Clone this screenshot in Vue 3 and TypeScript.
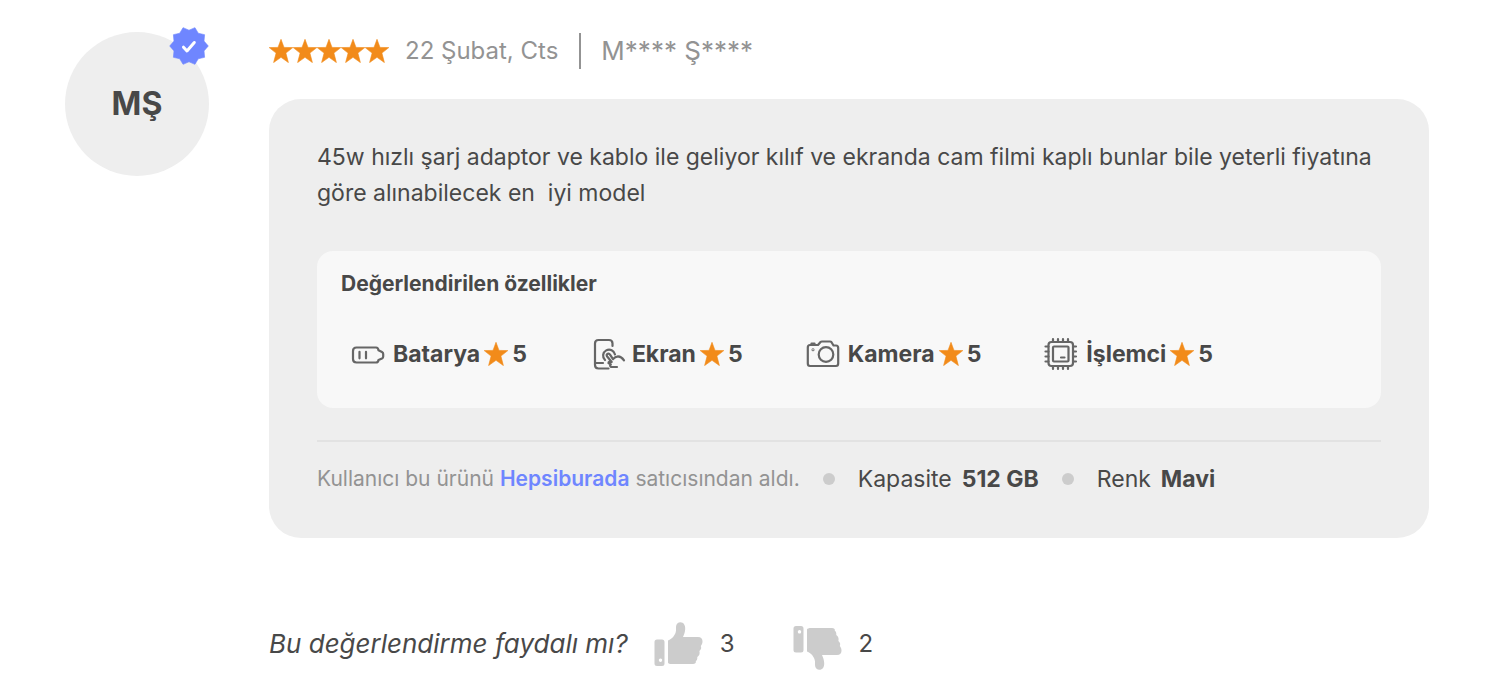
<script setup lang="ts">
import { ref } from 'vue'

interface Feature {
  icon: string
  name: string
  score: number
}

const features: Feature[] = [
  { icon: 'battery', name: 'Batarya', score: 5 },
  { icon: 'screen', name: 'Ekran', score: 5 },
  { icon: 'camera', name: 'Kamera', score: 5 },
  { icon: 'chip', name: 'İşlemci', score: 5 },
]

const likes = ref(3)
const dislikes = ref(2)

// Alternating outer and inner points of the ten-pointed seal
const sealPoints = Array.from({ length: 20 }, (_, i) => {
  const radius = i % 2 === 0 ? 19.3 : 15.8
  const angle = (i * Math.PI) / 10
  return `${(20 + radius * Math.cos(angle)).toFixed(2)},${(20 + radius * Math.sin(angle)).toFixed(2)}`
}).join(' ')
</script>

<template>
  <article class="review">
    <svg class="sprite" aria-hidden="true">
      <symbol id="star" viewBox="0 0 24 24">
        <path d="M12 0.3 15 8.4 23.8 8.6 16.9 14.1 19.4 23.6 12 18.3 4.6 23.6 7.1 14.1 0.2 8.6 9 8.4Z" fill="#f28b1a" stroke="#f28b1a" stroke-width=".6" stroke-linejoin="round" />
      </symbol>
      <symbol id="thumb" viewBox="0 0 50 50">
        <path fill-rule="evenodd" d="M3 18.5h5a2.500 2.500 0 0 1 2.500 2.500v21.500a2.500 2.500 0 0 1-2.500 2.500h-5a2.500 2.500 0 0 1-2.500-2.500v-21.500a2.500 2.500 0 0 1 2.500-2.500ZM6.500 37.500a1.700 1.700 0 1 0 .01 0Z" />
        <path d="M14 19.500C18.500 17.500 21.500 14 22 9.500V6C22 3 24 1.200 26.500 1.200 29.500 1.200 31.400 4 31.200 8 31 11 30.200 13.500 29 16H44C47 16 48.700 18 48.500 20.500 48.400 22.500 47.800 23.800 46.800 25 47.600 27 47.200 28.500 45.400 30 46 32.500 45.500 34.500 43.300 36 43.500 38.500 42.800 39.500 41.800 40.200 42.200 42 41 43 39 43H18C16 43 14 42.500 14 41.500Z" />
      </symbol>
    </svg>

    <div class="avatar">
      <span>MŞ</span>
      <svg class="seal" viewBox="0 0 40 40" role="img" aria-label="Onaylı">
        <polygon :points="sealPoints" fill="#6f86ff" stroke="#6f86ff" stroke-width=".6" stroke-linejoin="round" />
        <path d="M14.500 21.200 18 25 25.300 16.500" fill="none" stroke="#fff" stroke-width="3" stroke-linecap="round" stroke-linejoin="round" />
      </svg>
    </div>

    <div class="content">
      <header class="meta">
        <div class="stars" role="img" aria-label="5 yıldız">
          <svg v-for="n in 5" :key="n" class="star"><use href="#star" /></svg>
        </div>
        <span class="date">22 Şubat, Cts</span>
        <span class="author">M**** Ş****</span>
      </header>

      <section class="card">
        <p class="text">45w hızlı şarj adaptor ve kablo ile geliyor kılıf ve ekranda cam filmi kaplı bunlar bile yeterli fiyatına göre alınabilecek en&nbsp; iyi model</p>

        <div class="rated">
          <h3>Değerlendirilen özellikler</h3>
          <ul>
            <li v-for="feature in features" :key="feature.name">
              <svg class="icon" viewBox="0 0 48 40" fill="none" stroke="#666" stroke-width="2.200" stroke-linecap="round" stroke-linejoin="round">
                <g v-if="feature.icon === 'battery'">
                  <path d="M12.500 13.500H32Q34.200 13.500 34.500 16.300L38 18.100Q39.200 18.700 39.200 20V22.500Q39.200 23.800 38 24.400L34.500 26Q34.200 28.500 32 28.500H12.500Q9 28.500 9 25V17Q9 13.500 12.500 13.500Z" />
                  <path d="M15.500 17.800V24.300M22 17.800V24.300" />
                </g>
                <g v-else-if="feature.icon === 'screen'">
                  <path d="M29.500 12V9.500Q29.500 6 26 6H15.500Q12 6 12 9.500V31Q12 34.500 15.500 34.500H25.500M12.500 29H20" />
                  <path d="M22 26A6 6 0 1 1 32 20.500" />
                  <path d="M28.700 28 24 22.300Q23.200 20.500 24.700 19.800 26.200 19.200 27.200 20.800L30 25.200Q32 22.500 35 22.300 38.500 22.500 41 26.300M28.700 28Q25.200 27 25.500 29L27.800 30.500Q26.300 31.500 28 33H34" />
                </g>
                <g v-else-if="feature.icon === 'camera'">
                  <path d="M11 11H19L21.500 8Q22 7.500 23 7.500H31Q32 7.500 32.500 8.200L34.500 11.500H37Q39.200 11.500 39.200 14V29.500Q39.200 32 37 32H11Q8.800 32 8.800 29.500V13.500Q8.800 11 11 11ZM12.500 10.500V9.500H15.500V10.500" />
                  <circle cx="27" cy="20.500" r="7.300" />
                  <circle cx="14" cy="15.700" r=".4" />
                </g>
                <g v-else>
                  <rect x="11.500" y="8" width="24.500" height="24" rx="3" />
                  <rect x="16" y="12.500" width="15.500" height="15" rx="1" />
                  <path d="M16 8V5M21 8V5M26 8V5M31 8V5M16 32V35M21 32V35M26 32V35M31 32V35M11.500 12.500H8.500M11.500 17.500H8.500M11.500 22.500H8.500M11.500 27.500H8.500M36 12.500H39M36 17.500H39M36 22.500H39M36 27.500H39M24 23.500H27.500" />
                </g>
              </svg>
              <span>{{ feature.name }}</span>
              <svg class="star"><use href="#star" /></svg>
              <span>{{ feature.score }}</span>
            </li>
          </ul>
        </div>

        <footer class="purchase">
          <p class="seller">Kullanıcı bu ürünü <a href="#">Hepsiburada</a> satıcısından aldı.</p>
          <p class="option">Kapasite <b>512 GB</b></p>
          <p class="option">Renk <b>Mavi</b></p>
        </footer>
      </section>

      <div class="helpful">
        <em>Bu değerlendirme faydalı mı?</em>
        <button type="button" class="vote up" aria-label="Faydalı" @click="likes++">
          <svg class="thumb"><use href="#thumb" /></svg>
          <span>{{ likes }}</span>
        </button>
        <button type="button" class="vote down" aria-label="Faydalı değil" @click="dislikes++">
          <svg class="thumb"><use href="#thumb" /></svg>
          <span>{{ dislikes }}</span>
        </button>
      </div>
    </div>
  </article>
</template>

<style>
body {
  margin: 0;
  background: #fff;
}
</style>

<style scoped>
.review {
  display: flex;
  gap: 60px;
  padding: 26px 67px 8px 65px;
  font-family: Inter, "Liberation Sans", sans-serif;
  font-size: 24px;
  line-height: 36px;
  color: #484848;
}
.sprite {
  position: absolute;
  width: 0;
  height: 0;
}
.avatar {
  position: relative;
  display: flex;
  flex: none;
  align-items: center;
  justify-content: center;
  width: 144px;
  height: 144px;
  margin-top: 6px;
  border-radius: 50%;
  background: #eee;
  font-size: 32px;
  font-weight: 700;
}
.seal {
  position: absolute;
  top: -6px;
  right: 0;
  width: 40px;
  height: 40px;
}
.content {
  flex: 1;
  min-width: 0;
}
.meta {
  display: flex;
  align-items: center;
  height: 50px;
  color: #939393;
}
.stars {
  display: flex;
}
.star {
  flex: none;
  width: 24px;
  height: 24px;
}
.date {
  margin-left: 16px;
}
.author {
  margin-left: 21px;
  padding-left: 20px;
  border-left: 2px solid #939393;
  font-size: 26px;
}
.card {
  margin-top: 23px;
  padding: 40px 48px 41px;
  border-radius: 32px;
  background: #eee;
  font-size: 23px;
}
p {
  margin: 0;
}
.rated {
  margin-top: 40px;
  padding: 15px 24px 34px;
  border-radius: 16px;
  background: #f8f8f8;
}
h3 {
  margin: 0;
  font-size: 21px;
  font-weight: 700;
}
ul {
  display: flex;
  flex-wrap: wrap;
  gap: 56px;
  margin: 32px 0 0;
  padding: 0 3px;
  list-style: none;
  font-weight: 700;
}
li {
  display: flex;
  align-items: center;
  gap: 4px;
}
.icon {
  flex: none;
  width: 48px;
  height: 40px;
  margin-right: -3px;
}
.purchase {
  display: flex;
  align-items: center;
  margin-top: 32px;
  padding-top: 19px;
  border-top: 2px solid #e2e2e2;
}
.seller {
  font-size: 21px;
  color: #939393;
}
a {
  color: #6f86ff;
  font-weight: 600;
  text-decoration: none;
}
.option {
  display: flex;
  align-items: center;
}
.option::before {
  content: "";
  width: 12px;
  height: 12px;
  margin: 0 23px;
  border-radius: 50%;
  background: #ccc;
}
.option b {
  margin-left: 10px;
}
.helpful {
  display: flex;
  align-items: center;
  height: 56px;
  margin-top: 78px;
}
em {
  font-size: 26px;
}
.vote {
  display: flex;
  align-items: center;
  gap: 16px;
  padding: 0;
  border: 0;
  background: none;
  font: inherit;
  color: inherit;
  cursor: pointer;
}
.up {
  margin-left: 26px;
}
.down {
  margin-left: 58px;
}
.thumb {
  width: 50px;
  height: 50px;
  margin-top: 4px;
  fill: #ccc;
}
.down .thumb {
  transform: scaleY(-1);
}
</style>
